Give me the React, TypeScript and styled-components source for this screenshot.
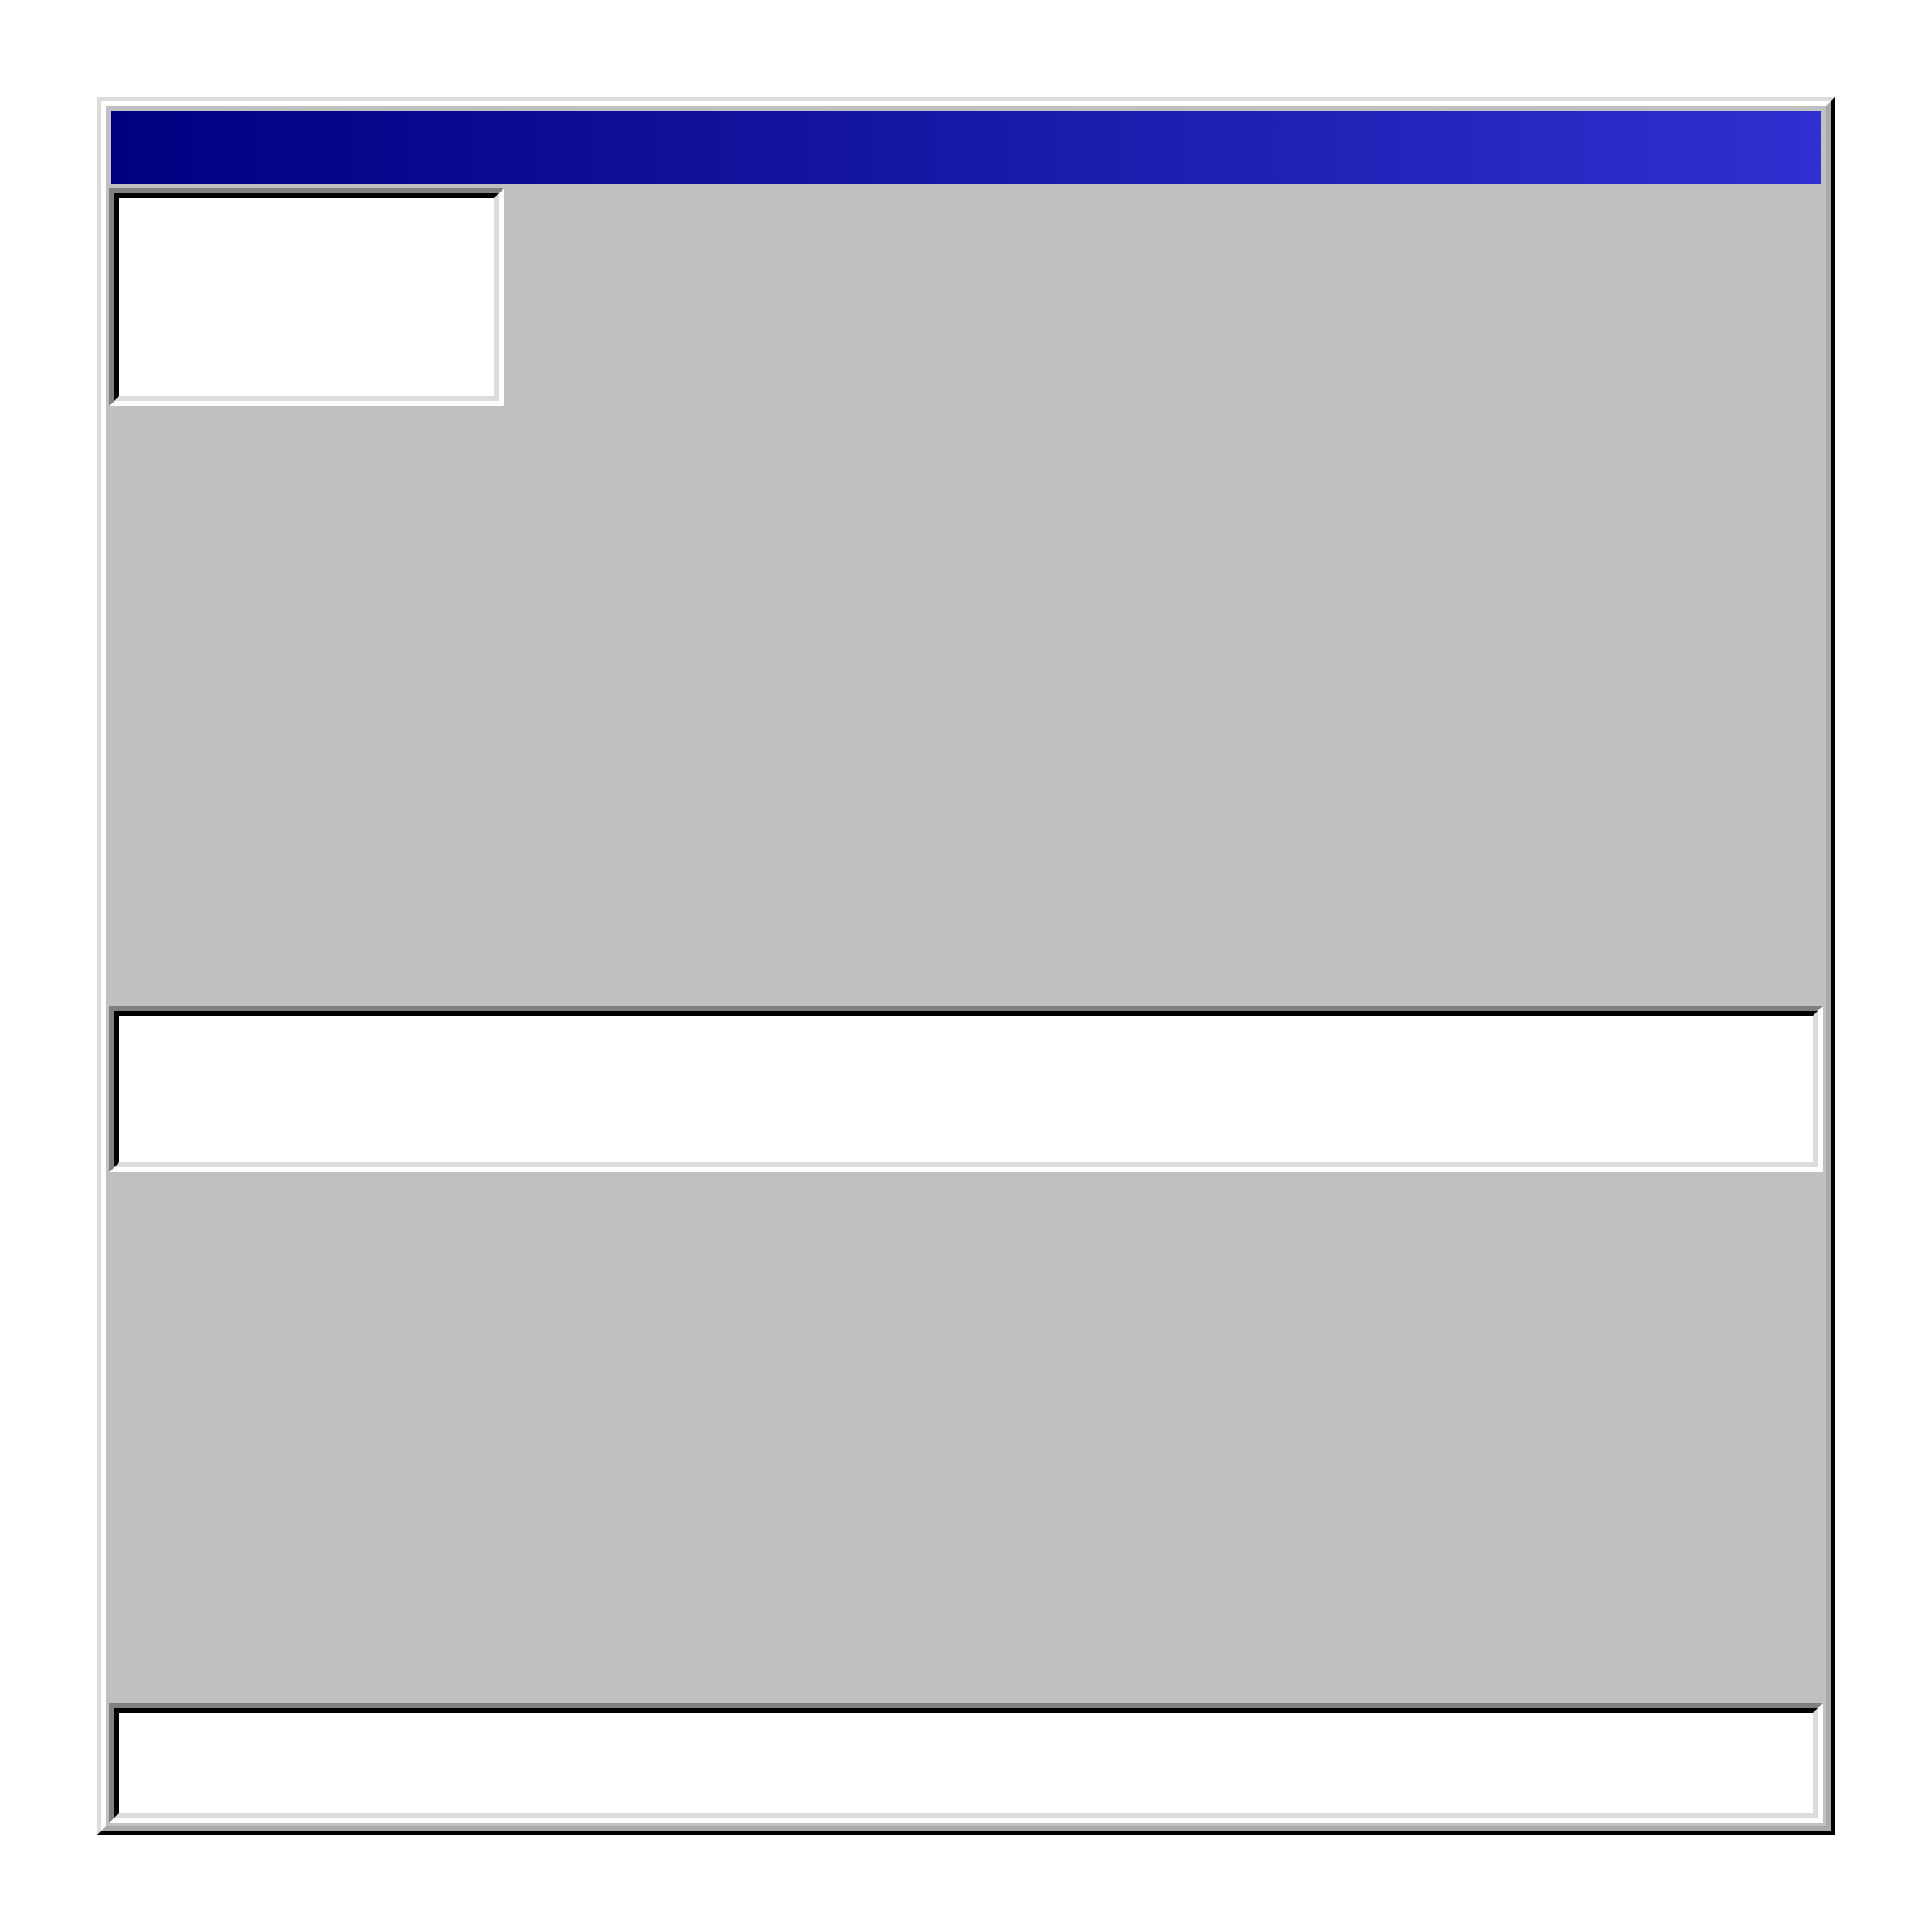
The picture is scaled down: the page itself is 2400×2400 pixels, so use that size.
import styled, { createGlobalStyle } from 'styled-components';

const GlobalStyle = createGlobalStyle`
	html,
	body {
		margin: 0;
		padding: 0;
		background: #ffffff;
		font-family: 'Liberation Sans', Arial, sans-serif;
	}
`;

const Page = styled.div`
	padding: 120px;
	box-sizing: border-box;
`;

// raised window frame: two 6px bevel layers
const Window = styled.div`
	width: 2160px;
	height: 2160px;
	box-sizing: border-box;
	border: 6px solid;
	border-color: #dcdcdc #000000 #000000 #dcdcdc;
`;

const Frame = styled.div`
	height: 100%;
	box-sizing: border-box;
	border: 6px solid;
	border-color: #ffffff #a9a9a9 #a9a9a9 #ffffff;
	background: #c0c0c0;
	padding: 4px;
	display: flex;
	flex-direction: column;
`;

const TitleBar = styled.div`
	height: 90px;
	margin: 2px 2px 6px;
	flex-shrink: 0;
	background: linear-gradient(to right, #000080, #3030d0);
`;

const Sunken = styled.div<{ width?: number; height: number; gapBefore?: number }>`
	width: ${(props) => (props.width ? `${props.width}px` : 'auto')};
	height: ${(props) => props.height}px;
	margin-top: ${(props) => props.gapBefore ?? 0}px;
	flex-shrink: 0;
	box-sizing: border-box;
	border: 6px solid;
	border-color: #808080 #ffffff #ffffff #808080;
`;

const Well = styled.div`
	height: 100%;
	box-sizing: border-box;
	border: 6px solid;
	border-color: #000000 #dcdcdc #dcdcdc #000000;
	background: #ffffff;
`;

const App = () => (
	<>
		<GlobalStyle />
		<Page>
			<Window>
				<Frame>
					<TitleBar />
					<Sunken width={490} height={270}>
						<Well />
					</Sunken>
					<Sunken height={206} gapBefore={746}>
						<Well />
					</Sunken>
					<Sunken height={148} gapBefore={660}>
						<Well />
					</Sunken>
				</Frame>
			</Window>
		</Page>
	</>
);

export default App;
